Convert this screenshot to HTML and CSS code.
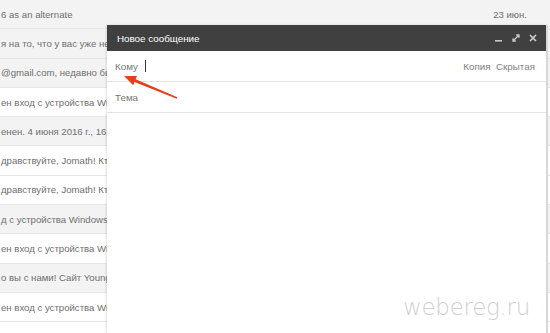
FILE: index.html
```html
<!DOCTYPE html>
<html lang="ru">
<head>
    <meta charset="UTF-8">
    <title>Новое сообщение</title>
    <link rel="stylesheet" href="styles.css">
</head>
<body>

    <div class="inbox">
        <div class="row read"><span class="snippet">6 as an alternate</span><span class="date">23 июн.</span></div>
        <div class="row read"><span class="snippet">я на то, что у вас уже не</span></div>
        <div class="row read"><span class="snippet">@gmail.com, недавно бы</span></div>
        <div class="row"><span class="snippet">ен вход с устройства Win</span></div>
        <div class="row read"><span class="snippet">енен. 4 июня 2016 г., 16:</span></div>
        <div class="row"><span class="snippet">дравствуйте, Jomath! Кто</span></div>
        <div class="row"><span class="snippet">дравствуйте, Jomath! Кто</span></div>
        <div class="row read"><span class="snippet">д с устройства Windows ч</span></div>
        <div class="row"><span class="snippet">ен вход с устройства Win</span></div>
        <div class="row read"><span class="snippet">о вы с нами! Сайт Young</span></div>
        <div class="row"><span class="snippet">ен вход с устройства Win</span></div>
        <div class="row last"></div>
    </div>

    <div class="compose">
        <div class="compose-header">
            <span class="compose-title">Новое сообщение</span>
            <div class="compose-actions">
                <svg width="8" height="8" viewBox="0 0 8 8"><rect x="0" y="6" width="7" height="1.6" fill="#c8c8c8"/></svg>
                <svg width="8" height="8" viewBox="0 0 8 8"><path d="M1 7 L7 1 M4.2 1 H7 V3.8 M1 4.2 V7 H3.8" stroke="#c8c8c8" stroke-width="1.3" fill="none"/></svg>
                <svg width="8" height="8" viewBox="0 0 8 8"><path d="M1 1 L7 7 M7 1 L1 7" stroke="#d0d0d0" stroke-width="1.6"/></svg>
            </div>
        </div>
        <div class="field">
            <span class="label">Кому</span>
            <span class="caret"></span>
            <span class="extras">Копия&nbsp; Скрытая</span>
        </div>
        <div class="field">
            <span class="label">Тема</span>
        </div>
        <div class="body"></div>
    </div>

    <svg class="arrow" width="550" height="333" viewBox="0 0 550 333">
        <polygon points="124,76 137,76 135.7,79.2 177.3,97.3 176.7,98.7 134.5,82 133.2,85.2" fill="#e2401e"/>
    </svg>

    <div class="watermark">webereg.ru</div>

</body>
</html>
```

FILE: styles.css
```css
body {
    margin: 0;
    width: 550px;
    height: 333px;
    overflow: hidden;
    position: relative;
    background-color: #fff;
    font-family: "Liberation Sans", Arial, sans-serif;
}

.inbox {
    height: 333px;
    overflow: hidden;
    display: flex;
    flex-direction: column;
}

.row {
    box-sizing: border-box;
    height: 29.3px;
    display: flex;
    align-items: center;
    justify-content: space-between;
    padding: 0 23px 0 1px;
    background-color: #fff;
    border-bottom: 1px solid #e6e6e6;
    font-size: 9.6px;
    color: #6f6f6f;
    flex-shrink: 0;
}

.row.read {
    background-color: #f3f3f3;
}

.row.last {
    height: 10.7px;
    border-bottom: none;
}

.compose {
    position: absolute;
    left: 107px;
    top: 25px;
    width: 439px;
    height: 308px;
    background-color: #fff;
    border-right: 2px solid #d8d8d8;
    box-shadow: -1px 0 2px rgba(0, 0, 0, 0.12);
    display: flex;
    flex-direction: column;
}

.compose-header {
    height: 26px;
    background-color: #404040;
    display: flex;
    align-items: center;
    justify-content: space-between;
    padding: 0 9px 0 10px;
}

.compose-title {
    color: #fff;
    font-size: 9.8px;
}

.compose-actions {
    display: flex;
    gap: 9px;
    align-items: center;
}

.field {
    height: 30px;
    display: flex;
    align-items: center;
    padding: 0 11px 0 8px;
    border-bottom: 1px solid #e3e3e3;
    font-size: 9.8px;
    color: #777;
}

.caret {
    width: 1.5px;
    height: 12px;
    background-color: #333;
    margin-left: 7px;
}

.extras {
    margin-left: auto;
    color: #808080;
}

.body {
    flex: 1;
}

.arrow {
    position: absolute;
    left: 0;
    top: 0;
}

.watermark {
    position: absolute;
    left: 403px;
    top: 294px;
    font-family: "DejaVu Sans", sans-serif;
    font-weight: 200;
    font-size: 23px;
    color: #cfcfcf;
    letter-spacing: -0.3px;
}
```
